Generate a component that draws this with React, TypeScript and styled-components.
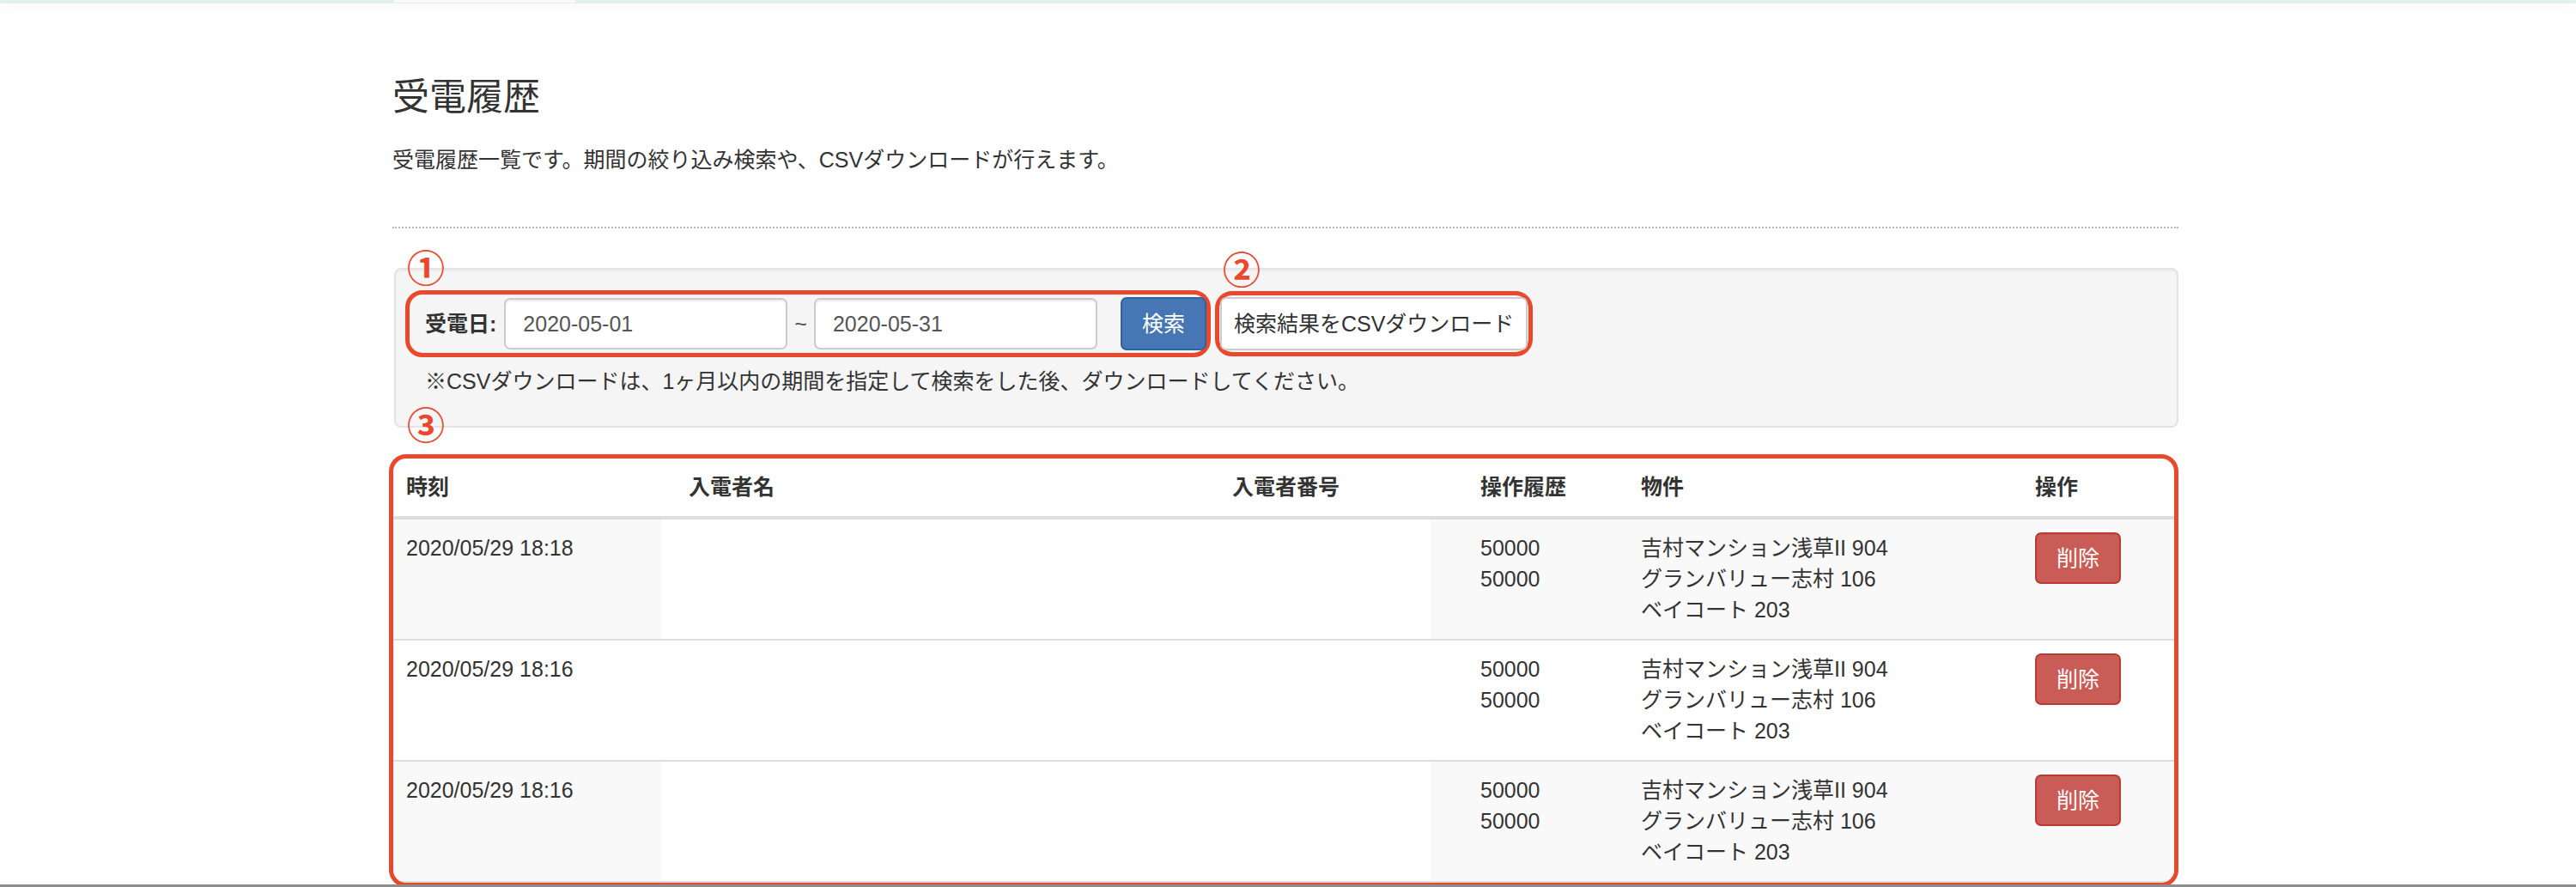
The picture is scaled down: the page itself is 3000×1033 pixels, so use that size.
import styled, { createGlobalStyle } from "styled-components";

const RED = "#e9482c";

const GlobalStyle = createGlobalStyle`
  html, body {
    margin: 0;
    padding: 0;
    background: #fff;
  }
  body {
    font-family: "Liberation Sans", "Noto Sans CJK JP", sans-serif;
    font-size: 25px;
    line-height: 36px;
    color: #333;
  }
  * {
    box-sizing: border-box;
  }
`;

const Page = styled.div`
  height: 1033px;
  overflow: hidden;
  border-bottom: 3px solid #8d8d8d;
`;

const TopBar = styled.div`
  height: 4px;
  padding-left: 459px;
  background: #e4f0f0;
  box-shadow: 0 3px 14px rgba(0, 0, 0, 0.08);
`;

const TopTab = styled.div`
  width: 211px;
  height: 3px;
  background: #f8fbfb;
`;

const Container = styled.div`
  width: 2080px;
  margin-left: 457px;
`;

const Title = styled.h1`
  margin: 86px 0 0;
  font-size: 43px;
  line-height: 47px;
  font-weight: 400;
`;

const Lead = styled.p`
  margin: 31px 0 0;
`;

const Divider = styled.hr`
  margin: 60px 0 0;
  height: 0;
  border: 0;
  border-top: 2px dotted #b8b8b8;
`;

const Well = styled.div`
  margin: 46px 0 0 2px;
  padding: 24px 11px 34px;
  background: #f5f5f5;
  border: 2px solid #e3e3e3;
  border-radius: 8px;
  box-shadow: inset 0 2px 2px rgba(0, 0, 0, 0.04);
`;

const FormRow = styled.div`
  display: flex;
  align-items: center;
  gap: 5px;
`;

const Callout = styled.div<{ $pad: string }>`
  position: relative;
  display: flex;
  align-items: center;
  padding: ${(p) => p.$pad};
  border: 5px solid ${RED};
  border-radius: 20px;
`;

const Marker = styled.span<{ $top: number; $left: number }>`
  position: absolute;
  top: ${(p) => p.$top}px;
  left: ${(p) => p.$left}px;
  color: ${RED};
  font-family: "Noto Sans CJK JP", sans-serif;
  font-size: 44px;
  font-weight: 700;
  line-height: 44px;
`;

const DateLabel = styled.label`
  margin-right: 9px;
  font-weight: 700;
  white-space: nowrap;
`;

const DateInput = styled.input`
  width: 330px;
  height: 60px;
  padding: 0 20px;
  font: inherit;
  color: #555;
  background: #fff;
  border: 2px solid #ccc;
  border-radius: 7px;
  box-shadow: inset 0 2px 2px rgba(0, 0, 0, 0.075);
  outline: none;
`;

const Tilde = styled.span`
  margin: 0 8px;
  color: #555;
`;

const variants = {
  primary: { bg: "#4677b4", border: "#2f64a0", color: "#fff" },
  default: { bg: "#fff", border: "#ccc", color: "#333" },
  danger: { bg: "#c95c56", border: "#b83a33", color: "#fff" },
};

const Button = styled.button<{ $variant: keyof typeof variants; $h: number; $px: number }>`
  height: ${(p) => p.$h}px;
  padding: 0 ${(p) => p.$px}px;
  font: inherit;
  white-space: nowrap;
  color: ${(p) => variants[p.$variant].color};
  background: ${(p) => variants[p.$variant].bg};
  border: 2px solid ${(p) => variants[p.$variant].border};
  border-radius: 7px;
  cursor: pointer;
`;

const SearchButton = styled(Button)`
  margin-left: 27px;
`;

const Note = styled.p`
  margin: 10px 0 0 23px;
`;

const TableFrame = styled.div`
  position: relative;
  width: 2084px;
  margin: 31px 0 0 -4px;
  border: 5px solid ${RED};
  border-radius: 20px;
`;

const TableClip = styled.div`
  overflow: hidden;
  border-radius: 15px;
`;

const Table = styled.table`
  width: 100%;
  table-layout: fixed;
  border-collapse: collapse;
`;

const HeadCell = styled.th<{ $pad: number }>`
  padding: 15px 16px 16px ${(p) => p.$pad}px;
  text-align: left;
  font-weight: 700;
  border-bottom: 4px solid #ddd;
`;

const Row = styled.tr<{ $striped: boolean }>`
  background: ${(p) => (p.$striped ? "#f9f9f9" : "#fff")};
`;

const Cell = styled.td<{ $pad: number; $blank?: boolean }>`
  padding: 15px 16px 16px ${(p) => p.$pad}px;
  vertical-align: top;
  border-bottom: 2px solid #ddd;
  background: ${(p) => (p.$blank ? "#fff" : "transparent")};
`;

const columns = [
  { label: "時刻", width: 313, pad: 15 },
  { label: "入電者名", width: 648, pad: 31 },
  { label: "入電者番号", width: 247, pad: 16 },
  { label: "操作履歴", width: 229, pad: 58 },
  { label: "物件", width: 459, pad: 16 },
  { label: "操作", width: 178, pad: 16 },
];

const properties = ["吉村マンション浅草II 904", "グランバリュー志村 106", "ベイコート 203"];

const calls = [
  { id: 1, time: "2020/05/29 18:18", ops: ["50000", "50000"], props: properties },
  { id: 2, time: "2020/05/29 18:16", ops: ["50000", "50000"], props: properties },
  { id: 3, time: "2020/05/29 18:16", ops: ["50000", "50000"], props: properties },
];

export default function App() {
  return (
    <>
      <GlobalStyle />
      <Page>
        <TopBar>
          <TopTab />
        </TopBar>
        <Container>
          <Title>受電履歴</Title>
          <Lead>受電履歴一覧です。期間の絞り込み検索や、CSVダウンロードが行えます。</Lead>
          <Divider />

          <Well>
            <FormRow>
              <Callout $pad="3px 0 3px 18px">
                <Marker $top={-55} $left={-3}>①</Marker>
                <DateLabel>受電日:</DateLabel>
                <DateInput defaultValue="2020-05-01" />
                <Tilde>~</Tilde>
                <DateInput defaultValue="2020-05-31" />
                <SearchButton $variant="primary" $h={62} $px={23}>
                  検索
                </SearchButton>
              </Callout>
              <Callout $pad="2px 1px">
                <Marker $top={-54} $left={4}>②</Marker>
                <Button $variant="default" $h={62} $px={14}>
                  検索結果をCSVダウンロード
                </Button>
              </Callout>
            </FormRow>
            <Note>※CSVダウンロードは、1ヶ月以内の期間を指定して検索をした後、ダウンロードしてください。</Note>
          </Well>

          <TableFrame>
            <Marker $top={-63} $left={16}>③</Marker>
            <TableClip>
              <Table>
                <colgroup>
                  {columns.map((c) => (
                    <col key={c.label} style={{ width: c.width }} />
                  ))}
                </colgroup>
                <thead>
                  <tr>
                    {columns.map((c) => (
                      <HeadCell key={c.label} $pad={c.pad}>
                        {c.label}
                      </HeadCell>
                    ))}
                  </tr>
                </thead>
                <tbody>
                  {calls.map((call, i) => (
                    <Row key={call.id} $striped={i % 2 === 0}>
                      <Cell $pad={columns[0].pad}>{call.time}</Cell>
                      <Cell $pad={columns[1].pad} $blank></Cell>
                      <Cell $pad={columns[2].pad} $blank></Cell>
                      <Cell $pad={columns[3].pad}>
                        {call.ops.map((op, j) => (
                          <div key={j}>{op}</div>
                        ))}
                      </Cell>
                      <Cell $pad={columns[4].pad}>
                        {call.props.map((name) => (
                          <div key={name}>{name}</div>
                        ))}
                      </Cell>
                      <Cell $pad={columns[5].pad}>
                        <Button $variant="danger" $h={60} $px={23}>
                          削除
                        </Button>
                      </Cell>
                    </Row>
                  ))}
                </tbody>
              </Table>
            </TableClip>
          </TableFrame>
        </Container>
      </Page>
    </>
  );
}
